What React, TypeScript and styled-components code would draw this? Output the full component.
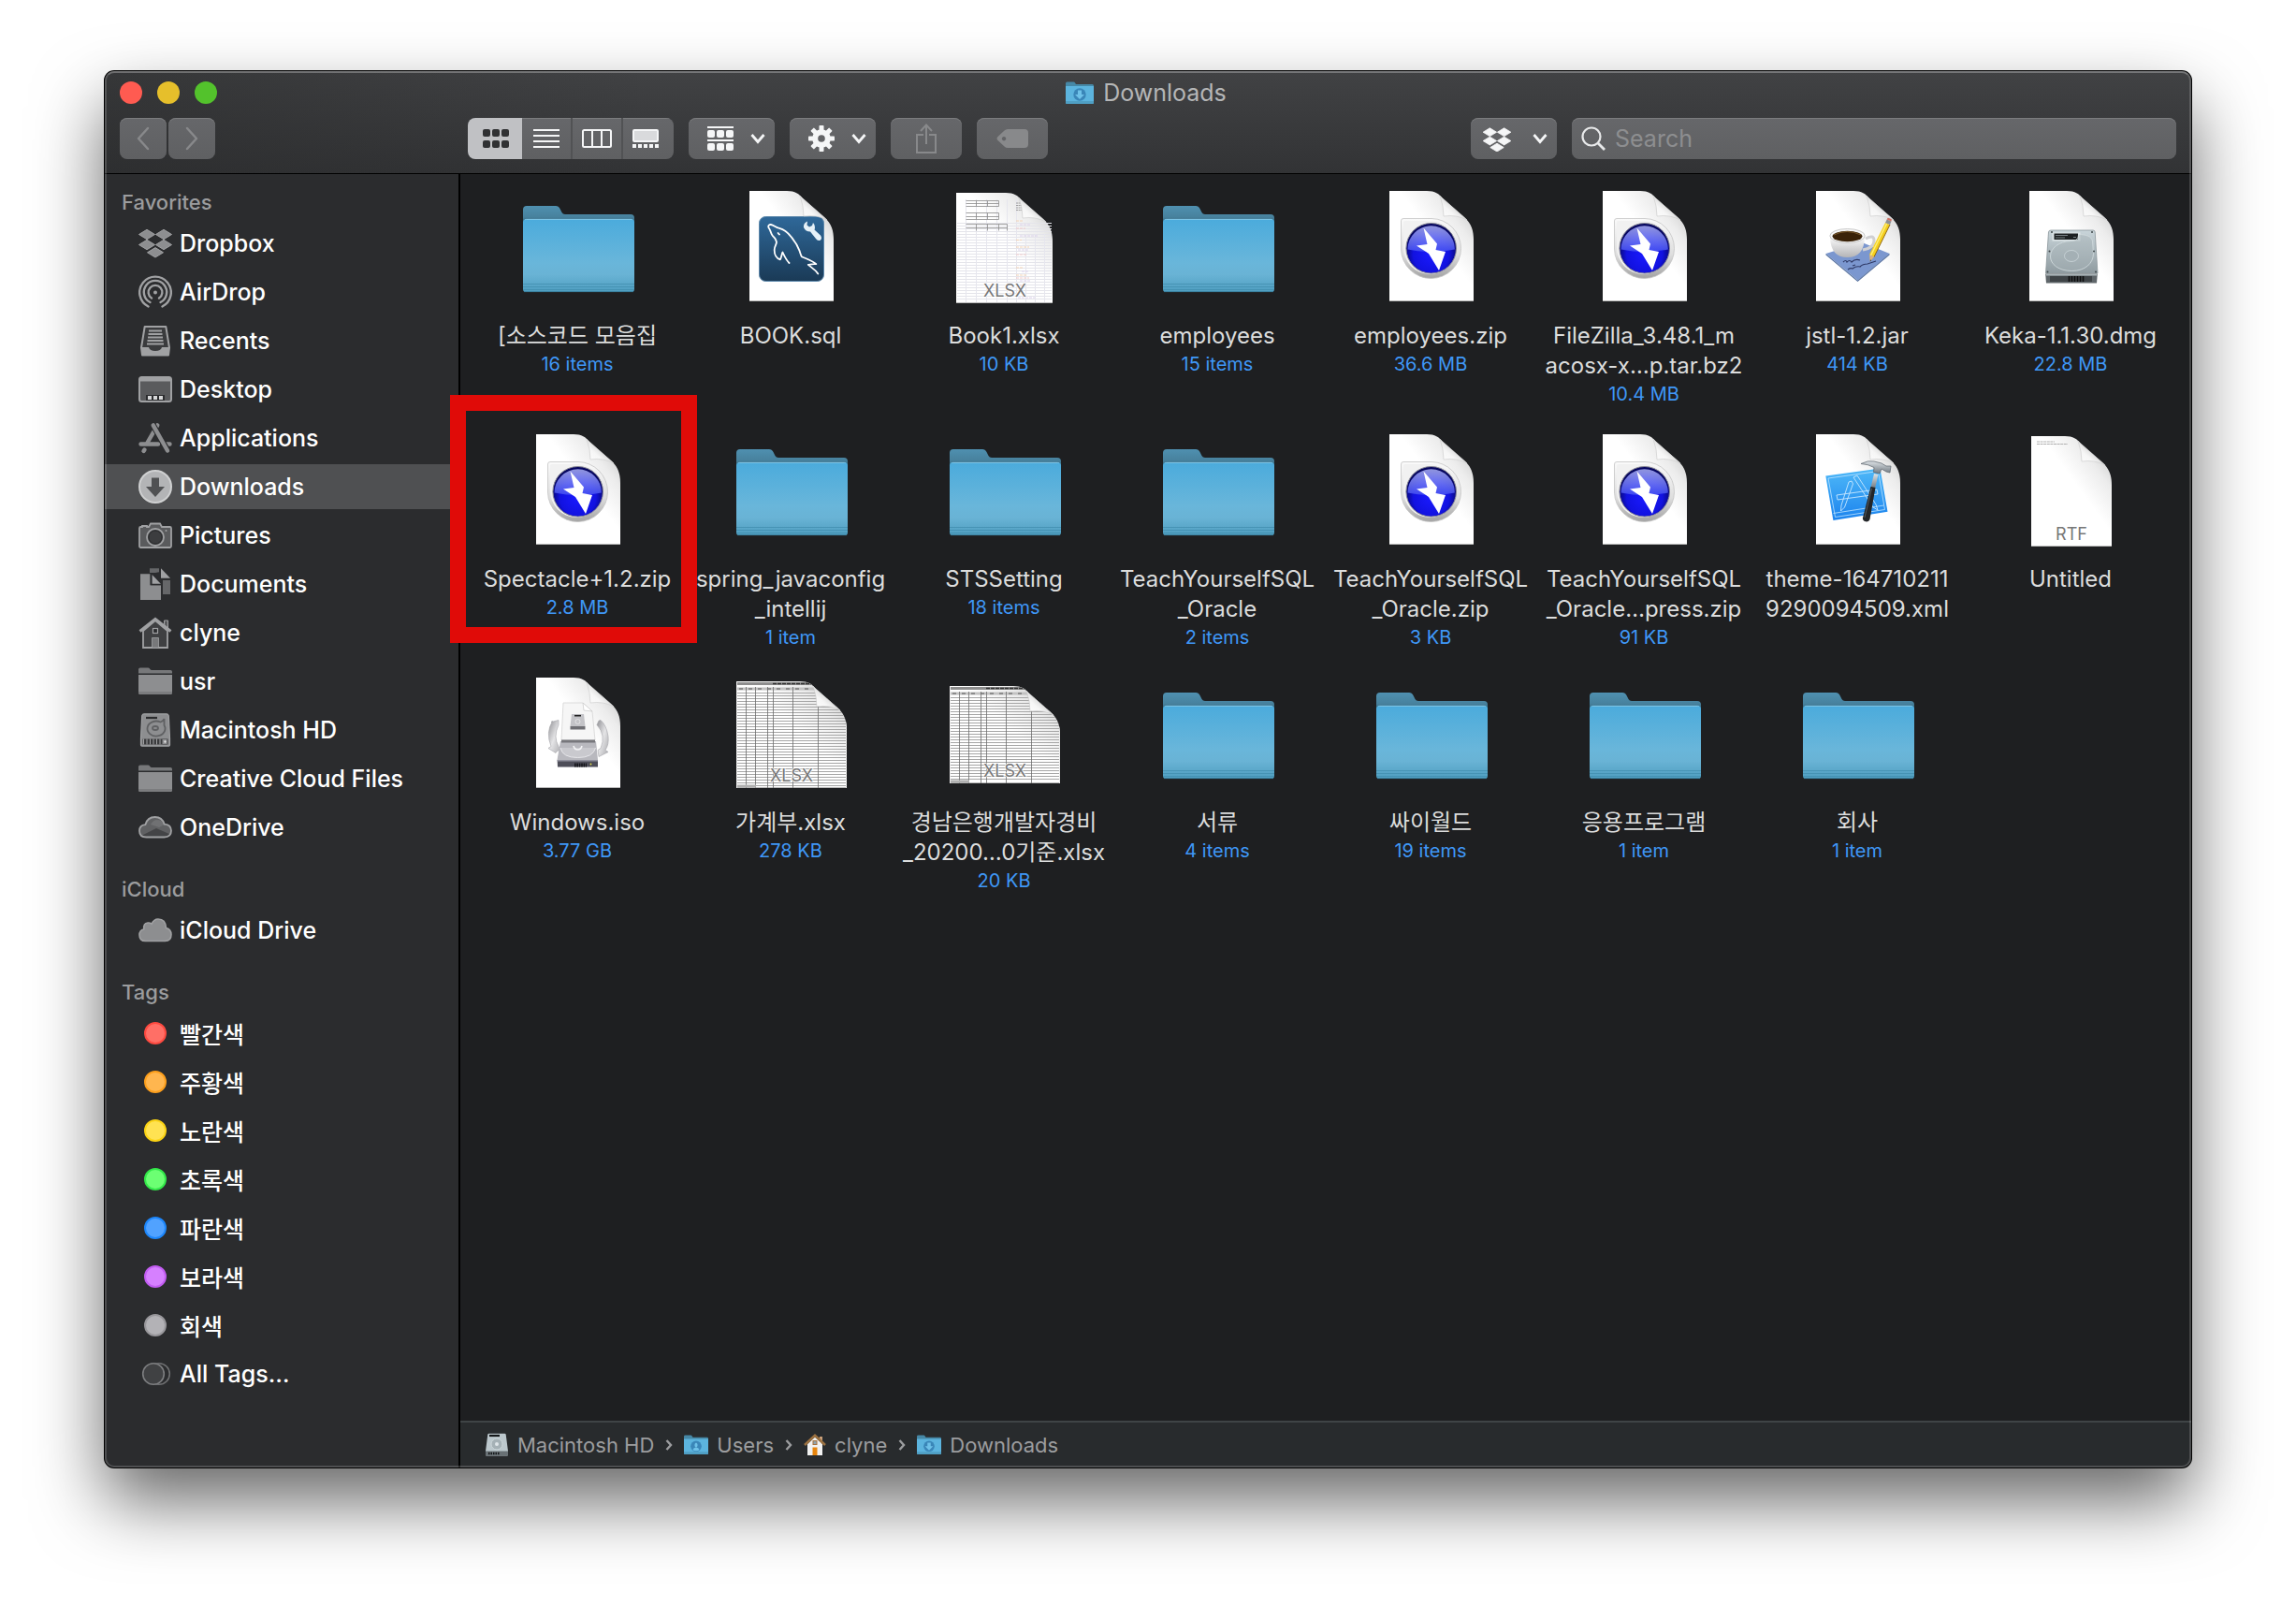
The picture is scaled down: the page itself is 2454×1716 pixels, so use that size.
import React from 'react';
import styled, { createGlobalStyle, css } from 'styled-components';

const GlobalStyle = createGlobalStyle`
  *, *::before, *::after { box-sizing: border-box; }
  body {
    margin: 0;
    background: #fff;
    font-family: Inter, "Noto Sans CJK KR", sans-serif;
    -webkit-font-smoothing: antialiased;
  }
  button, input { font: inherit; color: inherit; }
  svg { display: block; flex: none; }
`;

/* ---------- window ---------- */

const Desktop = styled.div`
  display: flex;
  min-height: 100vh;
  padding: 76px 112px 148px;
`;

const Window = styled.main`
  position: relative;
  display: flex;
  flex: 1;
  flex-direction: column;
  min-width: 0;
  border-radius: 10px;
  background: #1e1f21;
  box-shadow: 0 0 0 1px #000, 0 36px 75px rgba(0, 0, 0, 0.6);
  &::after {
    content: '';
    position: absolute;
    inset: 0;
    border: 2px solid rgba(255, 255, 255, 0.17);
    border-top-color: rgba(255, 255, 255, 0.28);
    border-radius: 10px;
    pointer-events: none;
  }
`;

const Header = styled.header`
  display: flex;
  flex-direction: column;
  gap: 12px;
  padding: 8px 16px 15px;
  border-bottom: 1px solid #000;
  border-radius: 10px 10px 0 0;
  background:
    linear-gradient(90deg, rgba(40, 41, 42, 0.45), rgba(40, 41, 42, 0) 26%),
    linear-gradient(#414244, #323335);
`;

const TitleRow = styled.div`
  display: grid;
  grid-template-columns: 1fr auto 1fr;
  align-items: center;
  height: 30px;
`;

const Lights = styled.div`
  display: flex;
  gap: 16px;
`;

const Light = styled.button<{ $color: string }>`
  width: 24px;
  height: 24px;
  padding: 0;
  border: 0;
  border-radius: 50%;
  background: ${(p) => p.$color};
`;

const Title = styled.h1`
  display: flex;
  align-items: center;
  gap: 10px;
  margin: 0;
  padding-right: 4px;
  color: #b5b6b7;
  font-size: 25px;
  font-weight: 400;
  line-height: 30px;
`;

const Toolbar = styled.div`
  display: flex;
  gap: 16px;
`;

const NavGroup = styled.div`
  display: flex;
  gap: 2px;
  width: 356px;
`;

const face = css`
  border: 0;
  background: linear-gradient(#66676a, #5f6062);
  box-shadow: inset 0 1px 0 #7b7c7e;
`;

const ToolButton = styled.button<{ $width: number }>`
  ${face}
  display: flex;
  align-items: center;
  justify-content: center;
  width: ${(p) => p.$width}px;
  height: 44px;
  padding: 0;
  border-radius: 8px;
  color: #f5f6f7;
  &:disabled { color: #88898b; }
`;

const MenuButton = styled(ToolButton)<{ $lead: number }>`
  justify-content: space-between;
  padding: 0 10px 0 ${(p) => p.$lead}px;
`;

const Segments = styled.div`
  display: flex;
  overflow: hidden;
  border-radius: 8px;
`;

const Segment = styled.button`
  ${face}
  display: flex;
  align-items: center;
  justify-content: center;
  width: 54px;
  height: 44px;
  padding: 0;
  border-right: 2px solid #515254;
  color: #f5f6f7;
  &:last-child {
    padding-right: 6px;
    border-right: 0;
  }
  &[aria-pressed='true'] {
    width: 58px;
    padding-left: 2px;
    border-right: 0;
    background: #c0c1c4;
    box-shadow: none;
    color: #303133;
  }
`;

const Spacer = styled.div`
  flex: 1;
`;

const SearchBox = styled.label`
  ${face}
  display: flex;
  align-items: center;
  gap: 10px;
  flex: 0 1 646px;
  height: 44px;
  padding: 0 10px;
  border-radius: 8px;
  color: #e8e9ea;
`;

const SearchInput = styled.input`
  flex: 1;
  min-width: 0;
  padding: 0;
  border: 0;
  outline: 0;
  background: none;
  font-size: 25px;
  &::placeholder { color: #8d8e90; opacity: 1; }
`;

const Body = styled.div`
  display: flex;
  flex: 1;
  min-height: 0;
`;

/* ---------- sidebar ---------- */

const Sidebar = styled.nav`
  flex: none;
  width: 380px;
  padding: 10px 0;
  border-right: 2px solid #000;
  border-radius: 0 0 0 10px;
  background: #2b2c2e;
`;

const Section = styled.section`
  margin-bottom: 22px;
`;

const SectionTitle = styled.h2`
  margin: 0;
  padding-left: 18px;
  color: #9b9c9e;
  font-size: 22px;
  font-weight: 500;
  line-height: 40px;
`;

const SideList = styled.ul`
  display: flex;
  flex-direction: column;
  gap: 4px;
  margin: 0;
  padding: 0;
  list-style: none;
`;

const SideLink = styled.a<{ $active?: boolean }>`
  display: flex;
  align-items: center;
  gap: 8px;
  height: 48px;
  padding-left: 36px;
  background: ${(p) => (p.$active ? '#4f5052' : 'transparent')};
  color: #fff;
  font-size: 25px;
  font-weight: 500;
  text-decoration: none;
  white-space: nowrap;
`;

const TagDot = styled.span<{ $fill: string; $ring: string }>`
  width: 24px;
  height: 24px;
  margin: 0 6px;
  border: 2px solid ${(p) => p.$ring};
  border-radius: 50%;
  background: ${(p) => p.$fill};
`;

/* ---------- content ---------- */

const Content = styled.div`
  display: flex;
  flex: 1;
  flex-direction: column;
  min-width: 0;
`;

const FileGrid = styled.ul`
  display: grid;
  flex: 1;
  grid-template-columns: repeat(auto-fill, 228px);
  grid-auto-rows: 260px;
  align-content: start;
  margin: 0;
  padding: 14px 12px;
  list-style: none;
`;

const FileCell = styled.li`
  position: relative;
  display: flex;
  flex-direction: column;
  align-items: center;
`;

const FileName = styled.span`
  margin-top: 15px;
  padding-right: 2px;
  color: #dcdddd;
  font-size: 24px;
  line-height: 32px;
  text-align: center;
  white-space: pre;
`;

const FileInfo = styled.span`
  padding-right: 2px;
  color: #3f97f7;
  font-size: 20px;
  line-height: 28px;
`;

const Highlight = styled.span`
  position: absolute;
  z-index: 1;
  inset: -38px -13px 33px -23px;
  border: 17px solid #e00b08;
`;

const PathBar = styled.nav`
  display: flex;
  align-items: center;
  gap: 12px;
  height: 50px;
  padding: 0 26px;
  border-top: 2px solid #3f4446;
  border-radius: 0 0 10px 0;
  background: #282b2d;
  color: #9c9d9f;
`;

const Crumb = styled.a`
  display: flex;
  align-items: center;
  gap: 9px;
  color: inherit;
  font-size: 22px;
  text-decoration: none;
`;

const PageLabel = styled.text`
  fill: #777;
  font-size: 18px;
  text-anchor: middle;
  paint-order: stroke;
  stroke: rgba(255, 255, 255, 0.7);
  stroke-width: 2px;
`;

const SharedDefs = styled.svg`
  position: absolute;
`;

/* ---------- shared gradients ---------- */

const Defs = () => (
  <SharedDefs width="0" height="0" aria-hidden="true">
    <defs>
      <linearGradient id="folderBack" x2="0" y2="1">
        <stop stopColor="#4f90b0" />
        <stop offset="0.14" stopColor="#47819d" />
        <stop offset="0.2" stopColor="#376579" />
      </linearGradient>
      <linearGradient id="folderFront" x2="0" y2="1">
        <stop stopColor="#4babdc" />
        <stop offset="0.6" stopColor="#69b6da" />
        <stop offset="0.76" stopColor="#69b3d5" />
        <stop offset="1" stopColor="#4f9ec0" />
      </linearGradient>
      <linearGradient id="paper" x1="0" y1="1" x2="1" y2="0">
        <stop offset="0.56" stopColor="#fff" />
        <stop offset="0.76" stopColor="#ececec" />
        <stop offset="0.9" stopColor="#cfcfcf" />
      </linearGradient>
      <linearGradient id="curl" x1="0" y1="1" x2="0.6" y2="0.4">
        <stop stopColor="#fff" />
        <stop offset="0.6" stopColor="#f6f6f6" />
        <stop offset="1" stopColor="#d4d4d4" />
      </linearGradient>
      <linearGradient id="sqlTile" x2="0" y2="1">
        <stop stopColor="#2f6899" />
        <stop offset="1" stopColor="#1a3a56" />
      </linearGradient>
      <linearGradient id="rim" x2="0" y2="1">
        <stop stopColor="#fafafa" />
        <stop offset="0.6" stopColor="#dedede" />
        <stop offset="1" stopColor="#a2a2a2" />
      </linearGradient>
      <radialGradient id="orb" cx="0.5" cy="0.62" r="0.55">
        <stop stopColor="#1a1aff" />
        <stop offset="0.65" stopColor="#1212e0" />
        <stop offset="1" stopColor="#060660" />
      </radialGradient>
      <linearGradient id="gloss" x2="0" y2="1">
        <stop stopColor="#a9aef5" />
        <stop offset="1" stopColor="#4450f2" />
      </linearGradient>
      <linearGradient id="metal" x2="0" y2="1">
        <stop stopColor="#c9d5da" />
        <stop offset="1" stopColor="#8f9ba0" />
      </linearGradient>
      <linearGradient id="cup" x2="0" y2="1">
        <stop stopColor="#fff" />
        <stop offset="1" stopColor="#b4b4b6" />
      </linearGradient>
      <linearGradient id="blueprint" x2="0" y2="1">
        <stop stopColor="#4fb9f8" />
        <stop offset="1" stopColor="#1b83ee" />
      </linearGradient>
      <linearGradient id="steel" x2="0" y2="1">
        <stop stopColor="#dfe4e8" />
        <stop offset="1" stopColor="#6f7880" />
      </linearGradient>
      <linearGradient id="arrowMetal" x2="1" y2="1">
        <stop stopColor="#8f8f93" />
        <stop offset="0.5" stopColor="#e4e4e6" />
        <stop offset="1" stopColor="#a9a9ad" />
      </linearGradient>
    </defs>
  </SharedDefs>
);

/* ---------- file icons, 128 x 128 ---------- */

const Art = ({ children }: { children: React.ReactNode }) => (
  <svg width="128" height="128" viewBox="0 0 128 128" aria-hidden="true">
    {children}
  </svg>
);

const FolderArt = () => (
  <Art>
    <path d="M5 106V24q0-4 4-4h31q3 0 4.500 3l2 4q1 2 3.500 2h70q4 0 4 4v73z" fill="url(#folderBack)" />
    <path d="M5 37.500q0-3.500 3.500-3.500h112q3.500 0 3.500 3.500V109q0 3-3 3H8q-3 0-3-3z" fill="url(#folderFront)" />
    <path d="M7 35q.5-.6 1.500-.6h112q1 0 1.500.6" fill="none" stroke="#82c8e6" />
    <path d="M5 103.500h119M5 106.500h119M5 109.500h119" stroke="#3f8bad" strokeOpacity="0.7" />
    <path d="M6 111.600h117" stroke="#3a7f9e" />
  </Art>
);

type PageProps = { l?: number; t?: number; r?: number; b?: number; children?: React.ReactNode };

const outline = (l: number, t: number, r: number, b: number) =>
  `M${l} ${t}H${r - 50}C${r - 41} ${t} ${r - 37} ${t + 3} ${r - 33} ${t + 8}L${r - 10} ${t + 28}` +
  `C${r - 2} ${t + 35} ${r} ${t + 43} ${r} ${t + 52}V${b}H${l}z`;

const Page = ({ l = 19, t = 4, r = 109, b = 122, children }: PageProps) => (
  <Art>
    <path d={outline(l, t, r, b)} fill="url(#paper)" />
    <path d={`M${l} ${b - 0.5}H${r}`} stroke="#b9b9b9" />
    {children}
    <path
      d={`M${r - 36} ${t + 5}Q${r - 32} ${t + 16} ${r - 32} ${t + 27}Q${r - 18} ${t + 25} ${r - 7} ${t + 31}L${r - 33} ${t + 8}z`}
      fill="url(#curl)"
      stroke="#cacaca"
      strokeWidth="0.6"
    />
  </Art>
);

const SqlArt = () => (
  <Page>
    <rect x="29.500" y="31.500" width="69" height="69" rx="7" fill="url(#sqlTile)" stroke="#5b87ab" />
    <path
      d="M51 50.500q-1-.6-1.400-1.500M61.500 81c-3-3-5-7-7-11.500-1 2-1.500 6-2.600 7.800-4-1-6.400-5.300-6.200-10.600.1-4 2-4.500 2.300-8-.6-4.300-3.500-5-5-8-1.500-2.500-1.300-4.500-3.500-7.500-.8-2 .5-3.400 2.500-3.200 3.500.8 5 3.300 9 3.900 5 1.500 8.500 4 12 8.500 4 4.500 7 9 9.500 15.500 1 3 1.400 4.500 2.300 6.300 5 2.300 12 4.300 15.500 8-3.500-.4-6 .2-8.500.7 3.500 3 7.500 5 10.500 9.600"
      fill="none"
      stroke="#fff"
      strokeWidth="1.800"
      strokeLinejoin="round"
      strokeLinecap="round"
    />
    <path
      d="M81 36.500l-.5 4 2.500 2 3-1.500 1-3q3 3 1.500 7.500l6.500 6q2 3 0 5-3 1.500-5-1.500l-6-7.500q-5 0-7-4.500-.5-4.500 4-6.500z"
      fill="#e6f1f8"
    />
  </Page>
);

const ZipArt = () => (
  <Page>
    <path d="M31.500 66V36q0-2.500 2.500-2.500h30a32 32 0 1 1-32.500 32.500z" fill="url(#rim)" stroke="#c4c4c4" strokeWidth="0.800" />
    <path d="M34 64V38q0-2 2-2h28a28.500 28.500 0 1 1-30 28z" fill="#f1f1f1" />
    <circle cx="63.700" cy="65.300" r="26.800" fill="url(#orb)" stroke="#8b8b95" />
    <path d="M38.500 66.500a25.200 25.200 0 1 1 50.400 0q-25 5-50.400 0z" fill="url(#gloss)" fillOpacity="0.850" />
    <path d="M55.500 43.500 70 60.500 68.500 67l10.500 2-7 20L61 71 48 62.500l11.500-1.500z" fill="#fff" />
  </Page>
);

const JarArt = () => (
  <Page>
    <path d="M29.500 71 68 59l29.700 12-34 28.500z" fill="#7b97cf" />
    <path d="M29.500 71v1.500L63.500 101l34-28.500V71l-34 28.500z" fill="#56719f" />
    <path d="M48 80q3-3 4 0 3-3 5 0 4-4 9-2M58 84l3-1M53 88q3-2 5-1 4-3 8-2 3-3 8-3l9-3" fill="none" stroke="#2f3a66" strokeWidth="1.200" />
    <path d="M72 55q9-5 9 2 0 8-12 10" fill="none" stroke="#d0d0d2" strokeWidth="3" />
    <path d="M34 52q0 23 18.500 23T71 52z" fill="url(#cup)" />
    <ellipse cx="52.500" cy="52" rx="18.700" ry="7.500" fill="#f7f7f7" stroke="#bdbdbd" strokeWidth="0.800" />
    <ellipse cx="52.500" cy="52.500" rx="16" ry="5.800" fill="#3a2208" />
    <path d="M38 51q14-7 29 0" fill="none" stroke="#7b5a2c" strokeWidth="1" />
    <path d="M93 38 76 72l5 2.500L98 40z" fill="#f5cf1d" />
    <path d="M94.500 39 77.500 73" stroke="#fbee7a" strokeWidth="1.500" />
    <path d="M98 40 81 74.500" stroke="#8e6510" strokeWidth="1" />
    <path d="M76 72l5 2.500-4.200 5z" fill="#dcb27a" />
    <path d="M77 77.500l1 .6-1.200 1.700z" fill="#222" />
    <path d="M94.700 34.500 93 38l5 2 1.500-3.500z" fill="#8c8f94" />
    <path d="M95.500 33q3-1 4.500 1l-.6 2.500-4.700-2z" fill="#cf6f62" />
  </Page>
);

const DmgArt = () => (
  <Page>
    <path d="M42 46h45q2 0 2.200 2L92 92H36.500l3-44q.2-2 2.500-2z" fill="url(#metal)" stroke="#8b979c" strokeWidth="0.800" />
    <path d="M36.200 92.500h55.600l-.8 10H37z" fill="#5f666a" />
    <path d="M37 93h54v1.500H37z" fill="#a9b3b7" />
    <path d="M41 95h45v6H41z" fill="#3f4447" />
    <path d="M61.500 95v6M64.500 95v6M67.500 95v6M70.500 95v6M73.500 95v6M76.500 95v6" stroke="#0e0f10" strokeWidth="1.600" />
    <rect x="43.500" y="48.500" width="30" height="9" fill="#dde5e8" />
    <rect x="45.500" y="49.500" width="25.500" height="6.500" fill="#1c2022" />
    <path d="M47 51.500h13M47 54h10M66 53.500h3" stroke="#8e979b" strokeWidth="0.800" />
    <path d="M41.500 74c0-9 9-16 22-16.500 6 0 8-3 8-7 8 0 14 2 15 7l1 13c0 11-9 19-23 19s-23-7-23-15.500z" fill="#a7b3b8" fillOpacity="0.500" stroke="#d3dde0" strokeWidth="0.800" />
    <ellipse cx="64" cy="73.500" rx="7.500" ry="6" fill="#a4b0b5" stroke="#cdd7da" strokeWidth="0.800" />
    <g fill="#3d4649">
      <circle cx="43" cy="48" r="1" /><circle cx="86" cy="48" r="1" />
      <circle cx="40.500" cy="68.500" r="1" /><circle cx="88" cy="68.500" r="1" />
      <circle cx="38.500" cy="90.500" r="1" /><circle cx="90" cy="90.500" r="1" />
    </g>
  </Page>
);

const XcodeHammer = () => (
  <>
    <path d="M81 46l4.500 1L82 62l-4.500-1z" fill="url(#steel)" />
    <path d="M67 35.500q8-4 14-2.500l8 2 5 3h5l-1 7-4-1-5-3-2 5-6.500-1.500.5-5q-6-3.500-14-4z" fill="url(#steel)" stroke="#59626a" strokeWidth="0.700" />
    <path d="M77.500 60l5 1-6 34q-1 3-4.500 2.300-3.500-1-3-4z" fill="#232629" />
    <path d="M78.500 62 71 93" stroke="#555b60" strokeWidth="1" />
  </>
);

const XcodeArt = () => (
  <svg width="128" height="128" viewBox="0 0 128 128" aria-hidden="true">
    <path d={outline(19, 4, 109, 122)} fill="url(#paper)" />
    <path d="M19 121.500H109" stroke="#b9b9b9" />
    <path d="M73 9Q77 20 77 31 91 29 102 35L76 12z" fill="url(#curl)" stroke="#cacaca" strokeWidth="0.600" />
    <path d="M29.300 48.500 87.500 40.500 95.500 86.800 37.400 96z" fill="url(#blueprint)" />
    <path d="M32 51 85.500 43.500 92.500 84.500 39.500 92.500z" fill="none" stroke="#bfe4ff" strokeWidth="0.800" />
    <path d="M37.500 88.500 91.500 80" fill="none" stroke="#bfe4ff" strokeWidth="0.800" />
    <path
      d="M59 50l4-2 20 31 2 6-5-3zM57 54l-3 1-8 25-.5 6 4-4 9-25zM41 69l1 5 43-6-1-5z"
      fill="none"
      stroke="#c8e8ff"
      strokeWidth="0.900"
      strokeLinejoin="round"
    />
    <XcodeHammer />
  </svg>
);

const RtfArt = () => (
  <Page l={21} t={6} r={107} b={124}>
    <path d="M27 12h19M27 14.500h33" stroke="#b0b0b0" strokeWidth="1" strokeDasharray="3 .6" />
    <PageLabel x="64" y="117">RTF</PageLabel>
  </Page>
);

const IsoArt = () => (
  <Page>
    <path d="M35 51.500l8-2v5q-6 13 0 23l3 3-4.500 2-1.500 2-8-5 3-2q-6-15 1.500-27z" fill="url(#arrowMetal)" stroke="#a3a3a7" strokeWidth="0.600" />
    <path d="M86 50l2-.5q6 5 8 17 1 9-3 15l3 2-10 5-1-7 3-2q6-14-4-25z" fill="url(#arrowMetal)" stroke="#a3a3a7" strokeWidth="0.600" />
    <path d="M48 31h21l10 9 3 31H46z" fill="#f6f6f6" stroke="#d4d4d4" strokeWidth="0.800" />
    <path d="M69 31l1 8 9 1z" fill="#fff" stroke="#c7c7c7" strokeWidth="0.700" />
    <path d="M57 43h13l1.500 13h-16z" fill="#c3c3c7" />
    <path d="M55.500 56h16v3.500h-16z" fill="#6f6f74" />
    <path d="M60 44.700h7" stroke="#222" strokeWidth="1.600" />
    <circle cx="63.500" cy="51" r="2.500" fill="none" stroke="#e8e8ea" strokeWidth="0.800" />
    <path d="M45 72h38l2 20H41.500z" fill="#b8b8be" />
    <path d="M46 70.500h36v3H46z" fill="#77777c" />
    <path d="M45 79q2 10.500 18.500 10.500T82.500 79" fill="#c9c9ce" stroke="#e6e6ea" strokeWidth="1" />
    <path d="M59 77q1 4 4.500 4t4.500-4" fill="none" stroke="#f4f4f6" strokeWidth="1.600" />
    <path d="M41.700 92h43.300v7.500H42z" fill="#4d4d58" />
    <path d="M41.700 92h43.300v1.500H41.700z" fill="#8f8f9c" />
    <path d="M60 97.500h13" stroke="#15151a" strokeWidth="4" strokeDasharray="1.600 .8" />
    <circle cx="77.500" cy="96.500" r="0.900" fill="#e5e04a" />
  </Page>
);

const range = (n: number) => Array.from({ length: n }, (_, i) => i);

const BookArt = () => (
  <Page l={12} t={6} r={115} b={124}>
    <path d={range(28).map((i) => `M13 ${38.5 + i * 3}h101`).join('')} stroke="#e4e4ea" />
    <path d="M22.500 13v110M33.500 13v110M44.500 13v110M55.500 13v110M66.500 13v110M76.500 13v110M86.500 50v73M96.500 50v73M106.500 50v73" stroke="#e6e6ee" />
    <g fill="none" stroke="#8a8a8a" strokeWidth="0.800">
      <path d="M22.500 14.500h35M22.500 17.500h35M22.500 20.500h35M33.500 14.500v6M45.500 14.500v6M57.500 14.500v6" />
      <path d="M22.500 27.500h35M22.500 31.500h35M22.500 34.500h35M33.500 27.500v7M45.500 27.500v7M57.500 27.500v7" />
      <path d="M22.500 39.500h44M22.500 43.500h44M33.500 39.500v7M45.500 39.500v7M57.500 39.500v7M66.500 39.500v7" />
      <path d="M76 17h6M76 19.500h6M76 22h6M76 24.500h6" strokeDasharray="2 .6" />
    </g>
    <g strokeWidth="0.900" strokeDasharray="3 1">
      <path d="M76 36h8M76 56.500h6M76 64h14M76 86h8M76 94h12" stroke="#f3cfae" />
      <path d="M80 40h12M80 52h20M78 67h12M82 90h8M80 100h12M78 118h18" stroke="#d9cdea" />
      <path d="M76 44h10M76 72h12M80 105h8M76 97h14" stroke="#f0c6c6" />
    </g>
    <PageLabel x="64" y="117">XLSX</PageLabel>
  </Page>
);

const LedgerArt = ({ t, b }: { t: number; b: number }) => (
  <Page l={5} t={t} r={123} b={b}>
    <clipPath id={`ledger${t}`}>
      <path d={outline(5, t, 123, b)} />
    </clipPath>
    <g clipPath={`url(#ledger${t})`}>
      <path d={range(Math.floor((b - t - 12) / 3)).map((i) => `M6 ${t + 12.5 + i * 3}h116`).join('')} stroke="#a6a6a6" />
      <path d={`M5 ${t + 2.5}h118`} stroke="#8e8e8e" strokeWidth="3" />
      <path d={`M44 ${t + 2.5}h48`} stroke="#333" strokeWidth="1.500" strokeDasharray="4 1" />
      <path d={`M6 ${t + 8}h117`} stroke="#c2c2c2" strokeWidth="3" />
      <path d={`M8 ${t + 8}h84`} stroke="#555" strokeWidth="1.200" strokeDasharray="4 6" />
      <path d={`M15.500 ${t + 6}V${b}M25.500 ${t + 6}V${b}M38.500 ${t + 6}V${b}M44.500 ${t + 6}V${b}M65.500 ${t + 6}V${b}M92.500 ${t + 20}V${b}`} stroke="#6c6c6c" strokeWidth="0.800" />
      <path d={`M5.500 ${t}V${b}M122.500 ${t}V${b}`} stroke="#eee" />
      <path d={`M6 ${b - 2}h20`} stroke="#b0b0b0" strokeWidth="3" />
    </g>
    <PageLabel x="64" y={b - 7}>XLSX</PageLabel>
  </Page>
);

/* ---------- sidebar icons, 36 x 36 ---------- */

const G = '#a0a1a3';
const M = '#8d8e90';
const D = '#5a5b5d';

const Glyph = ({ children }: { children: React.ReactNode }) => (
  <svg width="36" height="36" viewBox="0 0 36 36" fill="none" aria-hidden="true">
    {children}
  </svg>
);

const diamonds = 'M9 3.300l8.500 5.200L9 13.700.5 8.500zM27 3.300l8.500 5.200-8.500 5.200-8.500-5.200zM9 14.300l8.500 5.200L9 24.700.5 19.500zM27 14.300l8.500 5.200-8.500 5.200-8.500-5.200zM18 22.600l8.500 5.200L18 33l-8.500-5.200z';

const sideIcons: Record<string, React.ReactNode> = {
  dropbox: <path d={diamonds} fill={M} stroke={G} />,
  airdrop: (
    <g stroke={G} strokeWidth="2.400" strokeLinecap="round">
      <path d="M10.500 33.500a16.800 16.800 0 1 1 15 0" />
      <path d="M12.500 29a12.200 12.200 0 1 1 11 0" />
      <path d="M14 24.500a7.400 7.400 0 1 1 8 0" />
      <circle cx="18" cy="18.500" r="2" fill={G} stroke="none" />
    </g>
  ),
  recents: (
    <>
      <path d="M6.700 3h22.600L33 25.500 32 33.500H4L3 25.500z" fill="#3a3b3d" stroke={G} strokeWidth="2" strokeLinejoin="round" />
      <path d="M3 25h8q1 4 7 4t7-4h8l-1 8.500H4z" fill={G} />
      <path d="M11 7.500h14M10.500 11h15M10 14.500h16M9.500 18h17M9 21.500h18" stroke={G} strokeWidth="1.800" />
    </>
  ),
  desktop: (
    <>
      <rect x="1" y="5" width="34" height="26" rx="2.500" fill={D} stroke={G} strokeWidth="2" />
      <path d="M1 5h34v4.500H1z" fill={G} />
      <path d="M8 24h20v6H8z" fill="#2b2c2e" />
      <path d="M10 25h4v4h-4zM16 25h4v4h-4zM22 25h4v4h-4z" fill="#d6d7d8" />
    </>
  ),
  applications: (
    <g stroke={M} strokeWidth="4.400" strokeLinecap="round">
      <path d="M2.500 24.500h18.500M29 24.500h4.500" />
      <path d="M20.300 4.300 9.500 23M6.500 30.500 5.500 32" />
      <path d="M15.700 4.300 31.300 31.500" stroke="#2b2c2e" strokeWidth="6.500" />
      <path d="M15.700 4.300 31 31.500" />
    </g>
  ),
  downloads: (
    <>
      <circle cx="18" cy="18" r="17" fill="#b3b4b6" stroke="#cfd0d1" strokeWidth="2" />
      <path d="M14 8.500h8V18h6L18 29 8 18h6z" fill="#505153" />
    </>
  ),
  pictures: (
    <>
      <path d="M1 10.500q0-1.500 1.500-1.500H4V8h5v1h2l2-3.500h10L25 9h8.500q1.500 0 1.500 1.500v19q0 1.500-1.500 1.500h-31Q1 31 1 29.500z" fill={D} stroke={G} strokeWidth="1.800" />
      <circle cx="18" cy="20" r="9" fill="#3c3d3f" stroke={G} strokeWidth="1.800" />
      <circle cx="18" cy="20" r="7" stroke="#2b2c2e" />
      <circle cx="29.500" cy="13" r="1" fill={G} />
    </>
  ),
  documents: (
    <>
      <path d="M12 1.300h10v4l-4 .7h-6zM26 14h8v15h-8z" fill="#666769" />
      <path d="M24 1.300 34 11.700H24z" fill={G} />
      <path d="M2 7.300h10.500v12H24V35H2z" fill={M} />
      <path d="M14.500 8 24 18H14.500z" fill={G} />
      <path d="M13.500 6.500v12H24" stroke="#2b2c2e" strokeWidth="1.400" />
    </>
  ),
  home: (
    <>
      <path d="M27.500 12V5h4v10" fill={D} stroke={G} />
      <path d="M5 16 18 5l13 11v18H5z" fill="#3f4042" stroke={G} strokeWidth="1.800" />
      <path d="M1.500 16.500 18 3.500l16.500 13" stroke={G} strokeWidth="3" />
      <rect x="15.500" y="13.500" width="5" height="5" fill="#2b2c2e" stroke={G} strokeWidth="1.200" />
      <path d="M14.500 34V23.500h7V34z" fill="#77787a" stroke={G} strokeWidth="0.800" />
    </>
  ),
  folder: (
    <>
      <path d="M0 9.500V5.300Q0 3.500 1.800 3.500h8.400q1.300 0 2 1.200.7 1.300 2 1.300h20q1.800 0 1.800 1.800v1.700z" fill="#77787a" />
      <path d="M0 11h36v19.200q0 1.800-1.800 1.800H1.800Q0 32 0 30.200z" fill={M} />
      <path d="M0 29h36v1.200q0 1.800-1.800 1.800H1.800Q0 32 0 30.200z" fill="#7b7c7e" />
    </>
  ),
  drive: (
    <>
      <path d="M6 .8h24q2 0 2.300 2L33.500 27v7q0 1.200-1.200 1.200H3.700Q2.500 35.200 2.500 34v-7L3.700 2.800Q4 .8 6 .8z" fill={M} stroke={G} strokeWidth="1.200" />
      <path d="M8 5h12" stroke="#2b2c2e" strokeWidth="2.200" />
      <path d="M27.500 6v7a9.500 8 0 1 1-4-3.500q3-1 4-3.500z" stroke="#5f6062" strokeWidth="1.800" />
      <ellipse cx="18" cy="16" rx="3" ry="2" stroke="#5f6062" strokeWidth="1.800" />
      <path d="M4.500 27.500h27v6h-27z" fill="#3a3b3d" />
      <path d="M5 30.500h20" stroke={G} strokeWidth="6" strokeDasharray="1 2.500" />
      <path d="M25.500 28h5v5h-5z" fill={M} />
      <circle cx="28.500" cy="30.500" r="1.200" fill="#ddd" />
    </>
  ),
  onedrive: (
    <>
      <path d="M8.500 28.500Q1 28.500 1 21.700q0-5.700 6.300-6.500Q9.500 7 17.700 7q7.500 0 10 7.600 7.300.7 7.300 7 0 6.900-7.500 6.900z" fill="#606163" />
      <path d="M4 26.500 19 19l15 6.500-1 2-5 1.300H8z" fill="#434446" />
      <path d="M13 15q4-7 11-4l4 4-6 3z" fill="#707173" />
      <path d="M8.500 28.500Q1 28.500 1 21.700q0-5.700 6.300-6.500Q9.500 7 17.700 7q7.500 0 10 7.600 7.300.7 7.300 7 0 6.900-7.500 6.900z" stroke={G} strokeWidth="1.800" />
    </>
  ),
  cloud: (
    <path d="M7.500 29.500Q1 29.500 1 23q0-5 4.800-6.300Q5 10.500 10 10q2.300-.2 4 1.200Q16.500 6 21 6q8 0 8.500 9.500Q35 17 35 22.500q0 7-6.500 7z" fill={M} stroke={G} strokeWidth="1.600" />
  ),
  alltags: (
    <>
      <circle cx="22" cy="18" r="11.300" stroke="#6f7072" strokeWidth="1.600" />
      <circle cx="16" cy="18" r="11.300" fill="#404143" stroke="#7d7e80" strokeWidth="1.600" />
    </>
  ),
};

/* ---------- toolbar icons ---------- */

const Chevron = () => (
  <svg width="16" height="12" viewBox="0 0 16 12" fill="none" aria-hidden="true">
    <path d="M1.500 2 8 9.500 14.500 2" stroke="currentColor" strokeWidth="2.800" />
  </svg>
);

const Arrow = ({ d }: { d: string }) => (
  <svg width="16" height="26" viewBox="0 0 16 26" fill="none" aria-hidden="true">
    <path d={d} stroke="currentColor" strokeWidth="2.500" strokeLinecap="round" strokeLinejoin="round" />
  </svg>
);

const Cells = ({ y }: { y: number }) => (
  <>
    {[0, 10, 20].map((x) => (
      <rect key={x} x={x} y={y} width="8" height="8" rx="2" fill="currentColor" />
    ))}
  </>
);

const teeth = range(8).map((i) => i * 45);

const GearIcon = () => (
  <svg width="28" height="28" viewBox="-14 -14 28 28" aria-hidden="true">
    {teeth.map((a) => (
      <rect key={a} x="-2.500" y="-14" width="5" height="7" rx="0.800" fill="currentColor" transform={`rotate(${a})`} />
    ))}
    <circle r="6.800" fill="none" stroke="currentColor" strokeWidth="6" />
  </svg>
);

const MiniFolder = ({ width, height, mark }: { width: number; height: number; mark: 'down' | 'user' }) => (
  <svg width={width} height={height} viewBox="0 0 30 25" aria-hidden="true">
    <path d="M0 20V2Q0 .5 1.500.5h7q1 0 1.500 1L11 3h17.500Q30 3 30 4.500V20z" fill="#4688a6" />
    <path d="M0 5h30v17.500q0 1.500-1.500 1.500h-27Q0 24 0 22.500z" fill="#5cb4de" />
    <path d="M0 21h30v1.500q0 1.500-1.500 1.500h-27Q0 24 0 22.500z" fill="#4f9fc4" />
    <circle cx="15" cy="14" r="6.700" fill="#3a86b8" />
    {mark === 'down' ? (
      <path d="M13 9.500h4v4.500h3L15 19l-5-5h3z" fill="#6ec1e8" />
    ) : (
      <path d="M15 9.500a2.500 3 0 0 1 0 5.800 2.500 3 0 0 1 0-5.800zM10.800 18.500q1-3 4.200-3t4.200 3q-4.200 2.500-8.400 0z" fill="#6ec1e8" />
    )}
  </svg>
);

const MiniDrive = () => (
  <svg width="26" height="26" viewBox="0 0 26 26" aria-hidden="true">
    <path d="M4.500.8h17q1 0 1.200 1L25 19.500v4q0 1-1 1H2q-1 0-1-1v-4L3.300 1.800q.2-1 1.200-1z" fill="#bcc8cd" />
    <path d="M1 19.500h24v4q0 1-1 1H2q-1 0-1-1z" fill="#687074" />
    <path d="M5 3h11" stroke="#15181a" strokeWidth="2.200" />
    <circle cx="13" cy="12" r="6" fill="#a5b1b6" stroke="#cbd5d8" />
    <circle cx="13" cy="12" r="2" fill="#dfe6e9" />
    <path d="M4 22h12" stroke="#15181a" strokeWidth="2.500" strokeDasharray="1.500 1" />
  </svg>
);

const MiniHome = () => (
  <svg width="24" height="24" viewBox="0 0 24 24" aria-hidden="true">
    <path d="M17 3h3v7h-3z" fill="#c9a07a" />
    <path d="M4 11 12 3.500 20 11v12H4z" fill="#f1f1f0" />
    <path d="M1 12 12 1.800 23 12" fill="none" stroke="#9b7140" strokeWidth="2.600" />
    <rect x="10" y="7.500" width="4" height="4" fill="#8fa3ad" stroke="#a8713a" />
    <path d="M9.500 23v-8.500h5V23z" fill="#e8850c" />
  </svg>
);

const Separator = () => (
  <svg width="8" height="14" viewBox="0 0 8 14" fill="none" aria-hidden="true">
    <path d="M1.500 2 6 7l-4.500 5" stroke="currentColor" strokeWidth="2.400" />
  </svg>
);

/* ---------- data ---------- */

const favorites: [string, string][] = [
  ['Dropbox', 'dropbox'],
  ['AirDrop', 'airdrop'],
  ['Recents', 'recents'],
  ['Desktop', 'desktop'],
  ['Applications', 'applications'],
  ['Downloads', 'downloads'],
  ['Pictures', 'pictures'],
  ['Documents', 'documents'],
  ['clyne', 'home'],
  ['usr', 'folder'],
  ['Macintosh HD', 'drive'],
  ['Creative Cloud Files', 'folder'],
  ['OneDrive', 'onedrive'],
];

const tags: [string, string, string][] = [
  ['빨간색', '#ff6f66', '#fd4a40'],
  ['주황색', '#ffb64f', '#fd9f1c'],
  ['노란색', '#ffe252', '#fbd313'],
  ['초록색', '#6cff73', '#32e849'],
  ['파란색', '#51a2ff', '#1c86fb'],
  ['보라색', '#d680ff', '#c25cf2'],
  ['회색', '#b3b2b6', '#98979b'],
];

type FileEntry = { name: string; info?: string; art: React.ReactNode; marked?: boolean };

const folder = <FolderArt />;
const zip = <ZipArt />;

const files: FileEntry[] = [
  { name: '[소스코드 모음집', info: '16 items', art: folder },
  { name: 'BOOK.sql', art: <SqlArt /> },
  { name: 'Book1.xlsx', info: '10 KB', art: <BookArt /> },
  { name: 'employees', info: '15 items', art: folder },
  { name: 'employees.zip', info: '36.6 MB', art: zip },
  { name: 'FileZilla_3.48.1_m\nacosx-x…p.tar.bz2', info: '10.4 MB', art: zip },
  { name: 'jstl-1.2.jar', info: '414 KB', art: <JarArt /> },
  { name: 'Keka-1.1.30.dmg', info: '22.8 MB', art: <DmgArt /> },
  { name: 'Spectacle+1.2.zip', info: '2.8 MB', art: zip, marked: true },
  { name: 'spring_javaconfig\n_intellij', info: '1 item', art: folder },
  { name: 'STSSetting', info: '18 items', art: folder },
  { name: 'TeachYourselfSQL\n_Oracle', info: '2 items', art: folder },
  { name: 'TeachYourselfSQL\n_Oracle.zip', info: '3 KB', art: zip },
  { name: 'TeachYourselfSQL\n_Oracle…press.zip', info: '91 KB', art: zip },
  { name: 'theme-164710211\n9290094509.xml', art: <XcodeArt /> },
  { name: 'Untitled', art: <RtfArt /> },
  { name: 'Windows.iso', info: '3.77 GB', art: <IsoArt /> },
  { name: '가계부.xlsx', info: '278 KB', art: <LedgerArt t={8} b={122} /> },
  { name: '경남은행개발자경비\n_20200…0기준.xlsx', info: '20 KB', art: <LedgerArt t={13} b={117} /> },
  { name: '서류', info: '4 items', art: folder },
  { name: '싸이월드', info: '19 items', art: folder },
  { name: '응용프로그램', info: '1 item', art: folder },
  { name: '회사', info: '1 item', art: folder },
];

const path: [string, React.ReactNode][] = [
  ['Macintosh HD', <MiniDrive />],
  ['Users', <MiniFolder width={26} height={22} mark="user" />],
  ['clyne', <MiniHome />],
  ['Downloads', <MiniFolder width={26} height={22} mark="down" />],
];

/* ---------- app ---------- */

export default function App() {
  return (
    <Desktop>
      <GlobalStyle />
      <Defs />
      <Window>
        <Header>
          <TitleRow>
            <Lights>
              <Light $color="#ff5b51" aria-label="Close" />
              <Light $color="#e6bf2b" aria-label="Minimize" />
              <Light $color="#53c22c" aria-label="Zoom" />
            </Lights>
            <Title>
              <MiniFolder width={30} height={25} mark="down" />
              Downloads
            </Title>
          </TitleRow>
          <Toolbar>
            <NavGroup>
              <ToolButton $width={50} disabled aria-label="Back">
                <Arrow d="M13 2 3 13l10 11" />
              </ToolButton>
              <ToolButton $width={50} disabled aria-label="Forward">
                <Arrow d="M3 2l10 11L3 24" />
              </ToolButton>
            </NavGroup>
            <Segments>
              <Segment aria-pressed="true" aria-label="Icons">
                <svg width="28" height="20" aria-hidden="true">
                  <Cells y={0} />
                  <Cells y={12} />
                </svg>
              </Segment>
              <Segment aria-pressed="false" aria-label="List">
                <svg width="28" height="20" aria-hidden="true">
                  <path d="M0 1h28M0 7h28M0 13h28M0 19h28" stroke="currentColor" strokeWidth="2" />
                </svg>
              </Segment>
              <Segment aria-pressed="false" aria-label="Columns">
                <svg width="32" height="20" fill="none" stroke="currentColor" strokeWidth="2" aria-hidden="true">
                  <rect x="1" y="1" width="30" height="18" rx="1.500" />
                  <path d="M11 1v18M21 1v18" />
                </svg>
              </Segment>
              <Segment aria-pressed="false" aria-label="Gallery">
                <svg width="28" height="20" fill="none" stroke="currentColor" aria-hidden="true">
                  <rect x="1" y="1" width="26" height="12" rx="1" fill="#d9dadc" strokeWidth="2" />
                  <path d="M0 18h28" strokeWidth="4" strokeDasharray="4 2" />
                </svg>
              </Segment>
            </Segments>
            <MenuButton $width={92} $lead={20} aria-label="Group">
              <svg width="28" height="26" aria-hidden="true">
                <path d="M0 1h28M0 15h28" stroke="currentColor" strokeWidth="2" />
                <Cells y={4} />
                <Cells y={18} />
              </svg>
              <Chevron />
            </MenuButton>
            <MenuButton $width={92} $lead={20} aria-label="Actions">
              <GearIcon />
              <Chevron />
            </MenuButton>
            <ToolButton $width={76} disabled aria-label="Share">
              <svg width="22" height="32" viewBox="0 0 22 32" fill="none" stroke="currentColor" strokeWidth="2" aria-hidden="true">
                <path d="M8 12H1v19h20V12h-7M11 22V2M5 8l6-6.500L17 8" />
              </svg>
            </ToolButton>
            <ToolButton $width={76} disabled aria-label="Tags">
              <svg width="34" height="20" viewBox="0 0 34 20" fill="currentColor" aria-hidden="true">
                <path fillRule="evenodd" d="M12 0h18q4 0 4 4v12q0 4-4 4H12q-2 0-3.500-1.500L1.500 12q-2-2 0-4l7-6.500Q10 0 12 0zM8 8a2.200 2.200 0 1 0 .1 0z" />
              </svg>
            </ToolButton>
            <Spacer />
            <MenuButton $width={92} $lead={12} aria-label="Dropbox">
              <svg width="32" height="28" viewBox="0 0 36 33" aria-hidden="true">
                <path d={diamonds} fill="currentColor" stroke="currentColor" />
              </svg>
              <Chevron />
            </MenuButton>
            <SearchBox htmlFor="search">
              <svg width="26" height="26" viewBox="0 0 26 26" fill="none" stroke="currentColor" strokeWidth="2.200" aria-hidden="true">
                <circle cx="11" cy="11" r="9.500" />
                <path d="M18 18l7 7" strokeWidth="2.800" />
              </svg>
              <SearchInput id="search" type="text" placeholder="Search" aria-label="Search" />
            </SearchBox>
          </Toolbar>
        </Header>
        <Body>
          <Sidebar aria-label="Sidebar">
            <Section>
              <SectionTitle>Favorites</SectionTitle>
              <SideList>
                {favorites.map(([name, icon]) => (
                  <li key={name}>
                    <SideLink href="#" $active={name === 'Downloads'}>
                      <Glyph>{sideIcons[icon]}</Glyph>
                      {name}
                    </SideLink>
                  </li>
                ))}
              </SideList>
            </Section>
            <Section>
              <SectionTitle>iCloud</SectionTitle>
              <SideList>
                <li>
                  <SideLink href="#">
                    <Glyph>{sideIcons.cloud}</Glyph>
                    iCloud Drive
                  </SideLink>
                </li>
              </SideList>
            </Section>
            <Section>
              <SectionTitle>Tags</SectionTitle>
              <SideList>
                {tags.map(([name, fill, ring]) => (
                  <li key={name}>
                    <SideLink href="#">
                      <TagDot $fill={fill} $ring={ring} />
                      {name}
                    </SideLink>
                  </li>
                ))}
                <li>
                  <SideLink href="#">
                    <Glyph>{sideIcons.alltags}</Glyph>
                    All Tags…
                  </SideLink>
                </li>
              </SideList>
            </Section>
          </Sidebar>
          <Content>
            <FileGrid>
              {files.map((f) => (
                <FileCell key={f.name}>
                  {f.art}
                  <FileName>{f.name}</FileName>
                  {f.info && <FileInfo>{f.info}</FileInfo>}
                  {f.marked && <Highlight />}
                </FileCell>
              ))}
            </FileGrid>
            <PathBar aria-label="Path">
              {path.map(([name, icon], i) => (
                <React.Fragment key={name}>
                  {i > 0 && <Separator />}
                  <Crumb href="#">
                    {icon}
                    {name}
                  </Crumb>
                </React.Fragment>
              ))}
            </PathBar>
          </Content>
        </Body>
      </Window>
    </Desktop>
  );
}
